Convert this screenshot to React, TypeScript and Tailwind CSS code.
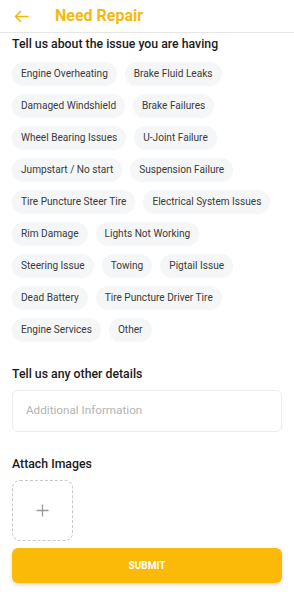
import React from "react";

const issues = [
  "Engine Overheating",
  "Brake Fluid Leaks",
  "Damaged Windshield",
  "Brake Failures",
  "Wheel Bearing Issues",
  "U-Joint Failure",
  "Jumpstart / No start",
  "Suspension Failure",
  "Tire Puncture Steer Tire",
  "Electrical System Issues",
  "Rim Damage",
  "Lights Not Working",
  "Steering Issue",
  "Towing",
  "Pigtail Issue",
  "Dead Battery",
  "Tire Puncture Driver Tire",
  "Engine Services",
  "Other",
];

export default function App() {
  return (
    <div className="w-[294px] h-[592px] bg-white overflow-hidden text-[#222]" style={{ fontFamily: "Roboto, 'Noto Sans', sans-serif" }}>
      <div className="h-[33px] flex items-center border-b border-[#e6e6e6]">
        <svg className="ml-[14px]" width="15" height="13" viewBox="0 0 15 13" fill="none" stroke="#f5b70c" strokeWidth="1.6" strokeLinecap="round" strokeLinejoin="round">
          <path d="M14 6.5H1.5M6.5 1.5L1.5 6.5L6.5 11.5" />
        </svg>
        <span className="ml-[26px] text-[16px] font-bold text-[#f6b90d] leading-none">Need Repair</span>
      </div>
      <div className="px-3">
        <div className="mt-[3px] text-[12.3px] font-medium leading-[16px] text-[#1a1a1a]">Tell us about the issue you are having</div>
        <div className="mt-[10px] flex flex-wrap gap-x-2 gap-y-2">
          {issues.map((t) => (
            <div key={t} className="h-[24px] px-[9px] flex items-center rounded-full bg-[#f5f6f8] text-[10.1px] text-[#3a3a3a]">
              {t}
            </div>
          ))}
        </div>
        <div className="mt-[24px] text-[12.3px] font-medium leading-[16px] text-[#1a1a1a]">Tell us any other details</div>
        <div className="mt-[8px] h-[42px] rounded-[6px] border border-[#ececec] flex items-center px-[13px] text-[11.7px] text-[#b3b3b3]">
          Additional Information
        </div>
        <div className="mt-[24px] text-[12.3px] font-medium leading-[16px] text-[#1a1a1a]">Attach Images</div>
        <div className="mt-[8px] w-[61px] h-[61px] rounded-[8px] border border-dashed border-[#c8c8c8] flex items-center justify-center">
          <svg width="13" height="13" viewBox="0 0 13 13" stroke="#9a9a9a" strokeWidth="1.3">
            <path d="M6.5 0.5V12.5M0.5 6.5H12.5" />
          </svg>
        </div>
        <div className="mt-[7px] h-[35px] rounded-[6px] bg-[#fbb908] flex items-center justify-center text-white text-[10px] font-bold shadow-[0_2px_4px_rgba(0,0,0,0.15)]">
          SUBMIT
        </div>
      </div>
    </div>
  );
}
